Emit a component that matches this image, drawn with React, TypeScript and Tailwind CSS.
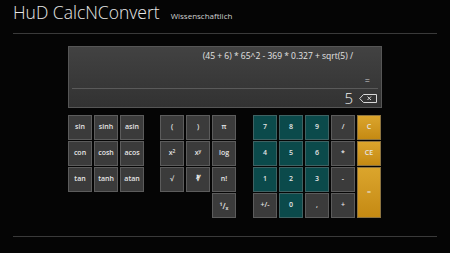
import React from "react";

type Tone = "gray" | "teal" | "orange";

const toneClass: Record<Tone, string> = {
  gray: "bg-[#3b3b3b] border-[#5c5c5c]",
  teal: "bg-[#0b4a4b] border-[#3f6263]",
  orange: "bg-gradient-to-b from-[#dba52c] to-[#c58a12] border-[#8d7440]",
};

const Key = ({
  label,
  tone = "gray",
  className = "",
}: {
  label: React.ReactNode;
  tone?: Tone;
  className?: string;
}) => (
  <div
    className={`flex items-center justify-center border text-[7px] font-semibold text-[#e6e6e6] ${toneClass[tone]} ${className}`}
  >
    {label}
  </div>
);

const BackspaceIcon = () => (
  <svg width="18" height="9" viewBox="0 0 18 9" fill="none">
    <path d="M4.5 0.5 H17.5 V8.5 H4.5 L0.7 4.5 Z" stroke="#d8d8d8" strokeWidth="1" />
    <path d="M8.5 2.5 L12 6 M12 2.5 L8.5 6" stroke="#d8d8d8" strokeWidth="1" />
  </svg>
);

const funcKeys = ["sin", "sinh", "asin", "con", "cosh", "acos", "tan", "tanh", "atan"];

export default function App() {
  return (
    <div
      className="w-[450px] h-[253px] overflow-hidden bg-[#050505] px-[13px] text-white"
      style={{ fontFamily: '"Open Sans", "Noto Sans", sans-serif' }}
    >
      <div className="h-[33px] flex items-baseline gap-[11px] pt-[2px]">
        <span className="text-[17.5px] font-light leading-[20px] text-[#e8e8e8]">HuD CalcNConvert</span>
        <span className="text-[8px] text-[#d0d0d0]">Wissenschaftlich</span>
      </div>
      <div className="h-px bg-[#3a3a3a]" />

      <div className="ml-[55px] mt-[12px] w-[314px]">
        <div className="h-[62px] border border-[#565656] bg-gradient-to-b from-[#424242] to-[#323232] flex flex-col">
          <div className="pt-[4px] pr-[28px] text-right text-[8.5px] leading-[10px] text-[#e4e4e4]">
            (45 + 6) * 65^2 - 369 * 0.327 + sqrt(5) /
          </div>
          <div className="flex-1" />
          <div className="pr-[11px] text-right text-[9px] leading-[10px] text-[#d0d0d0]">=</div>
          <div className="mx-[3px] mt-[2px] h-px bg-[#5a5a5a]" />
          <div className="h-[18px] flex items-center justify-end gap-[6px] pr-[4px]">
            <span className="text-[15px] font-light leading-[18px] text-[#f0f0f0]">5</span>
            <BackspaceIcon />
          </div>
        </div>

        <div className="mt-[7px] flex">
          <div className="grid grid-cols-[repeat(3,24px)] grid-rows-[repeat(3,25px)] gap-x-[2px] gap-y-[1px]">
            {funcKeys.map((k) => (
              <Key key={k} label={k} />
            ))}
          </div>

          <div className="ml-[16px] grid grid-cols-[repeat(3,24px)] grid-rows-[repeat(4,25px)] gap-x-[2px] gap-y-[1px]">
            <Key label="(" />
            <Key label=")" />
            <Key label="π" />
            <Key label={<span>x<sup className="text-[5px]">2</sup></span>} />
            <Key label={<span>x<sup className="text-[5px]">y</sup></span>} />
            <Key label="log" />
            <Key label="√" />
            <Key label="∛" />
            <Key label="n!" />
            <div />
            <div />
            <Key label={<span>¹/ₓ</span>} className="text-[8px]" />
          </div>

          <div className="ml-[17px] grid grid-cols-[repeat(5,24px)] grid-rows-[repeat(4,25px)] gap-x-[2px] gap-y-[1px]">
            <Key label="7" tone="teal" />
            <Key label="8" tone="teal" />
            <Key label="9" tone="teal" />
            <Key label="/" />
            <Key label="C" tone="orange" />
            <Key label="4" tone="teal" />
            <Key label="5" tone="teal" />
            <Key label="6" tone="teal" />
            <Key label="*" />
            <Key label="CE" tone="orange" />
            <Key label="1" tone="teal" />
            <Key label="2" tone="teal" />
            <Key label="3" tone="teal" />
            <Key label="-" />
            <Key label="=" tone="orange" className="row-span-2" />
            <Key label="+/-" />
            <Key label="0" tone="teal" />
            <Key label="," />
            <Key label="+" />
          </div>
        </div>
      </div>

      <div className="mt-[18px] h-px bg-[#3a3a3a]" />
    </div>
  );
}
